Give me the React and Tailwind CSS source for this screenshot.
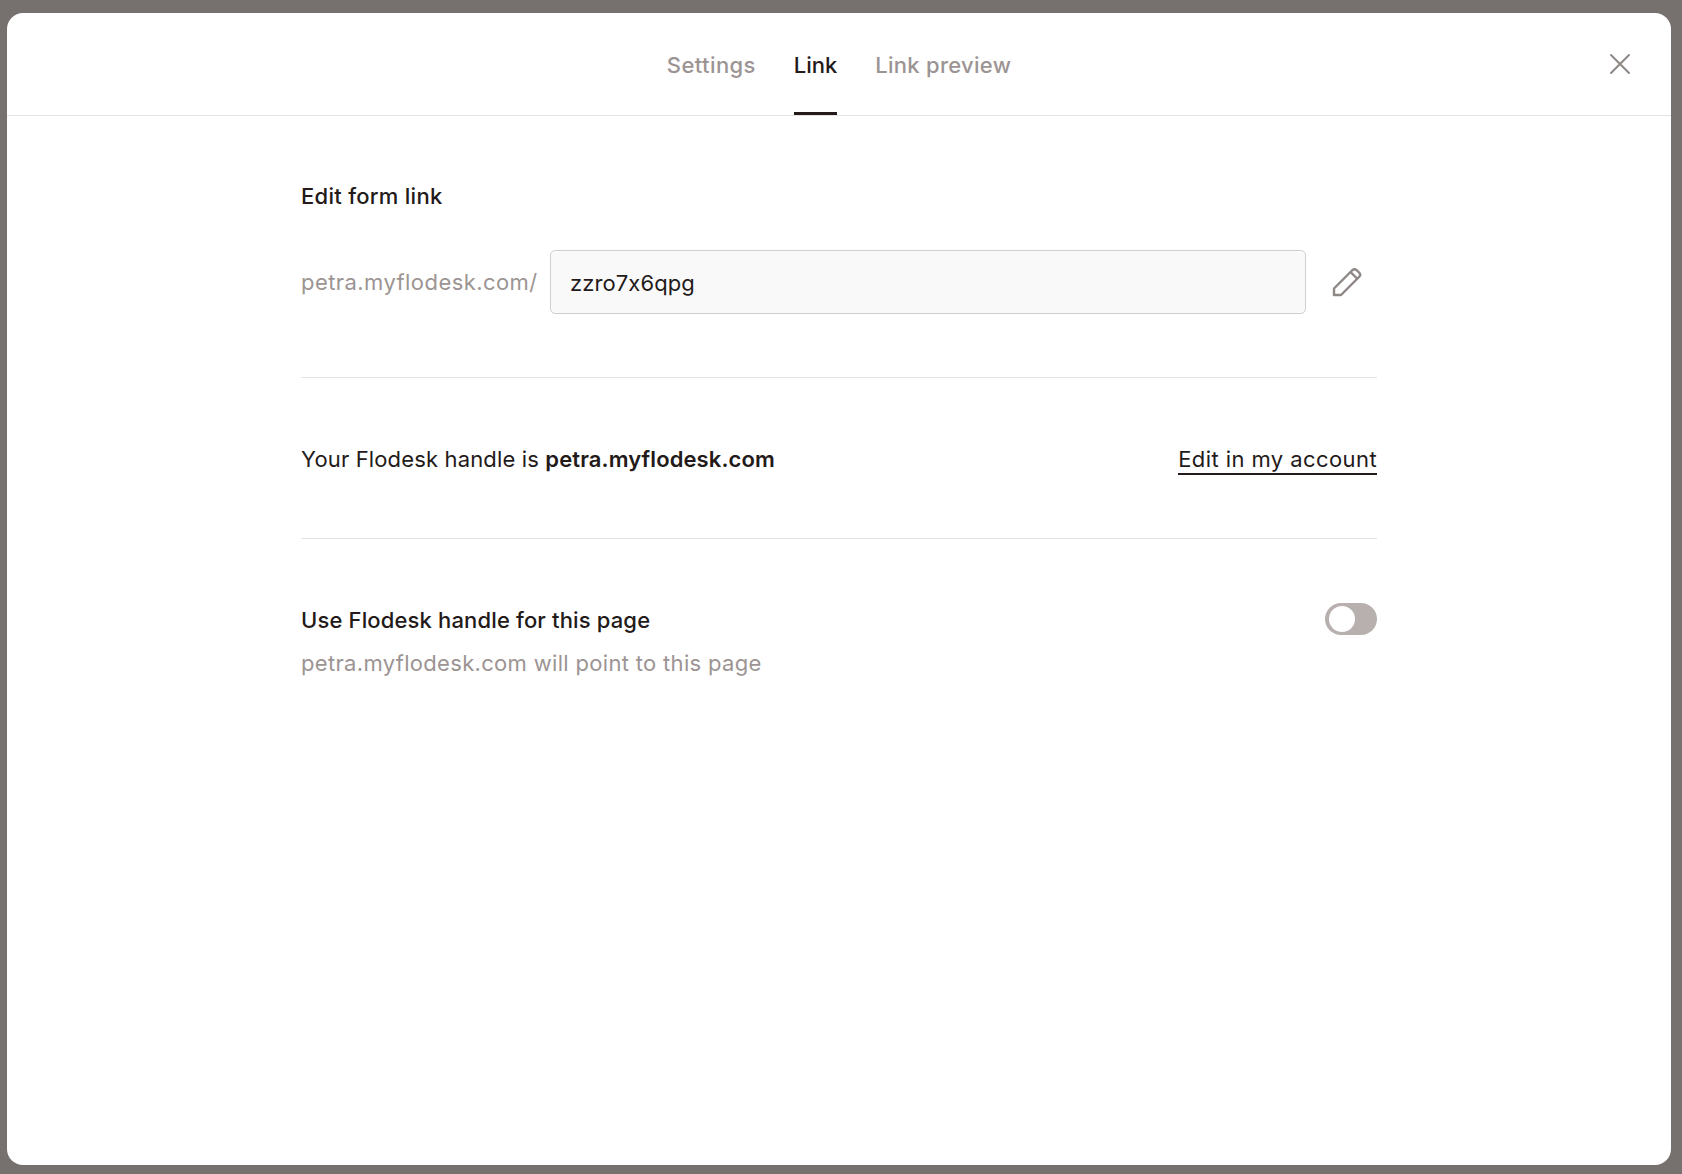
import React from "react";

function Tab({ label, active, spacing }) {
  return (
    <div className={`relative flex h-full items-center text-[22px] font-medium ${spacing} ${active ? "text-[#231a19]" : "text-[#9c9493]"}`}>
      <span className="pt-[2px]">{label}</span>
      {active && <span className="absolute bottom-0 left-0 right-0 h-[3px] bg-[#231a19]" />}
    </div>
  );
}

export default function App() {
  return (
    <div className="h-[1174px] w-full overflow-hidden bg-[#76706e] pb-[9px] pl-[7px] pr-[11px] pt-[13px] font-['Inter',sans-serif] text-[#231a19] [font-feature-settings:'calt'_0]">
      <div className="h-full rounded-[16px] bg-white">
        <header className="relative flex h-[103px] justify-center gap-[38px] border-b border-[#e4e2e2]">
          <Tab label="Settings" spacing="tracking-[0.4px]" />
          <Tab label="Link" active spacing="tracking-[0px]" />
          <Tab label="Link preview" spacing="tracking-[0.27px]" />
          <button className="absolute right-[40px] top-[40px] text-[#8f8786]" aria-label="Close">
            <svg width="22" height="22" viewBox="0 0 22 22" fill="none" stroke="currentColor" strokeWidth="2" strokeLinecap="round">
              <path d="M2 2 L20 20 M20 2 L2 20" />
            </svg>
          </button>
        </header>

        <main className="mx-auto w-[1076px]">
          <section className="border-b border-[#e4e2e2] pb-[63px] pt-[64px]">
            <h2 className="text-[22px] font-[550] leading-[32px] tracking-[0.28px]">Edit form link</h2>
            <div className="mt-[38px] flex h-[64px] items-center">
              <span className="w-[249px] text-[22px] tracking-[0.43px] text-[#9c9493]">petra.myflodesk.com/</span>
              <div className="flex h-full w-[756px] items-center rounded-[5px] border border-[#d3cfce] bg-[#f9f9f9] px-[19px] pt-[2px] text-[22px] tracking-[0.1px]">
                zzro7x6qpg
              </div>
              <svg className="ml-[25px] text-[#8f8786]" width="32" height="32" viewBox="0 0 32 32" fill="none" stroke="currentColor" strokeWidth="2.4" strokeLinejoin="round">
                <path d="M3 29 L3 22.5 L21.5 4 Q23.5 2.5 25.5 4 L28.5 7 Q30 9 28.5 10.5 L10 29 Z" />
                <path d="M19.5 6 L26.5 13" />
              </svg>
            </div>
          </section>

          <section className="flex h-[161px] items-center justify-between border-b border-[#e4e2e2] pt-[2px] text-[22px]">
            <p className="tracking-[0.15px]">
              Your Flodesk handle is <strong className="font-semibold tracking-[0.11px]">petra.myflodesk.com</strong>
            </p>
            <a className="border-b-2 border-[#231a19] pt-[2px] leading-[28px] tracking-[0.42px]">Edit in my account</a>
          </section>

          <section className="flex items-start justify-between pt-[64px]">
            <div>
              <h2 className="pt-px text-[22px] font-[550] leading-[32px] tracking-[0.15px]">Use Flodesk handle for this page</h2>
              <p className="mt-[11px] text-[22px] leading-[32px] tracking-[0.32px] text-[#9c9493]">petra.myflodesk.com will point to this page</p>
            </div>
            <div className="flex h-[32px] w-[52px] items-center rounded-full bg-[#b8b0ae] pl-[4px]">
              <span className="h-[26px] w-[26px] rounded-full bg-white" />
            </div>
          </section>
        </main>
      </div>
    </div>
  );
}
